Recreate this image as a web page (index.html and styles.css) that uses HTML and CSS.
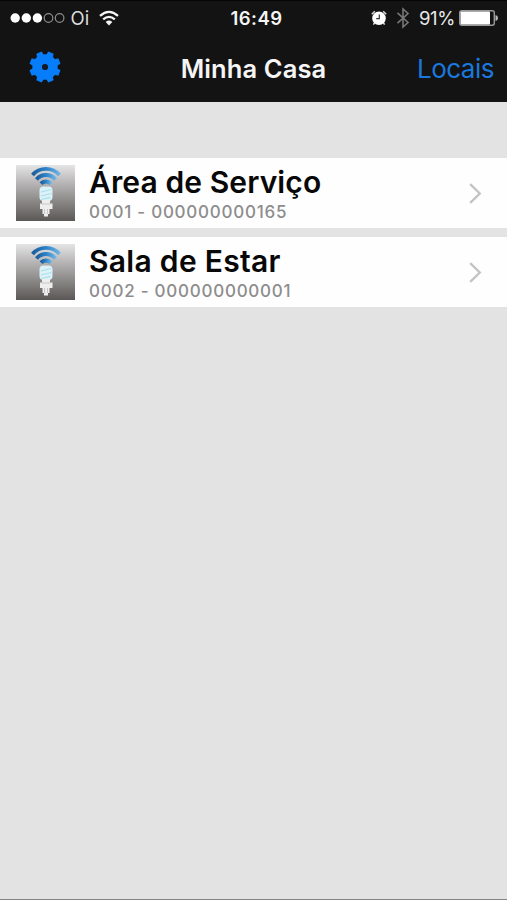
FILE: index.html
```html
<!DOCTYPE html>
<html lang="pt-BR">
<head>
  <meta charset="utf-8">
  <title>Minha Casa</title>
  <link rel="stylesheet" href="styles.css">
</head>
<body>
<svg width="0" height="0" class="symbols">
  <defs>
    <linearGradient id="metal" x1="0" y1="0" x2="0" y2="1">
      <stop offset="0" stop-color="#e6e5e5"/>
      <stop offset="0.3" stop-color="#bab8b8"/>
      <stop offset="1" stop-color="#5b5757"/>
    </linearGradient>
    <linearGradient id="wave" x1="0" y1="0" x2="1" y2="0">
      <stop offset="0" stop-color="#1d5c9c"/>
      <stop offset="0.5" stop-color="#2b83c9"/>
      <stop offset="1" stop-color="#6fb5e6"/>
    </linearGradient>
    <symbol id="lamp" viewBox="0 0 59 56">
      <rect width="59" height="56" fill="url(#metal)"/>
      <g fill="none" stroke="url(#wave)" stroke-width="3.8">
        <path d="M16.5 10A18 18 0 0 1 43.5 10"/>
        <path d="M20.5 14.4A12.5 12.5 0 0 1 39.5 14.4"/>
        <path d="M25 18.6A6.8 6.8 0 0 1 35 18.6" stroke-width="4"/>
      </g>
      <rect x="23.5" y="21.5" width="13" height="14.5" rx="4" fill="#dcf2f7"/>
      <path d="M25 27l10-2.5M25 31l10.5-2.5M25.5 34.5l9-2.2" stroke="#a9dfeb" stroke-width="1.2"/>
      <path d="M26 35h8v3.5h2.5v5.5h-3v5h-1.5v2.5h-4v-2.5h-1.5v-5H24v-5.5h2z" fill="#eee"/>
      <path d="M28.5 44v5M31.5 44v5M25.5 39h9" stroke="#bbb" stroke-width="0.8"/>
    </symbol>
  </defs>
</svg>

<header class="header">
  <div class="status">
    <div class="status-left">
      <svg width="55" height="12" viewBox="0 0 55 12">
        <g fill="#fff">
          <circle cx="5.2" cy="6" r="4.7"/>
          <circle cx="16.3" cy="6" r="4.7"/>
          <circle cx="27.4" cy="6" r="4.7"/>
        </g>
        <g fill="none" stroke="#8c8c8c" stroke-width="1.2">
          <circle cx="38.5" cy="6" r="4.3"/>
          <circle cx="49.6" cy="6" r="4.3"/>
        </g>
      </svg>
      <span class="carrier">Oi</span>
      <svg width="20" height="16" viewBox="0 0 20 16">
        <path d="M1 5.8Q10 -2 19 5.8M4.2 9.4Q10 4.4 15.8 9.4" fill="none" stroke="#f4f4f4" stroke-width="2.3"/>
        <path d="M6.7 11.9Q10 9.2 13.3 11.9L10 15.4z" fill="#f4f4f4"/>
      </svg>
    </div>
    <span class="clock">16:49</span>
    <div class="status-right">
      <svg width="16" height="16" viewBox="0 0 16 16">
        <path d="M0.8 4.2L3.8 1.2M15.2 4.2L12.2 1.2M3.8 12.5L2.4 14.6M12.2 12.5L13.6 14.6" stroke="#ddd" stroke-width="1.5"/>
        <circle cx="8" cy="8.2" r="6.8" fill="#fff"/>
        <path d="M8.3 4.6v4H5.2" fill="none" stroke="#333" stroke-width="1.2"/>
      </svg>
      <svg class="bluetooth" width="14" height="22" viewBox="0 0 14 22">
        <path d="M1.5 5.8L12 15.5L7 20V2L12 6.5L1.5 16.2" fill="none" stroke="#777" stroke-width="1.6"/>
      </svg>
      <span class="percent">91%</span>
      <svg class="battery" width="40" height="16" viewBox="0 0 40 16">
        <rect x="0.7" y="0.7" width="34.6" height="14.6" rx="2" fill="none" stroke="#999" stroke-width="1.4"/>
        <rect x="1.5" y="1.5" width="29.5" height="13" rx="0.8" fill="#fff"/>
        <path d="M36.5 5Q39 5.3 39 8T36.5 11z" fill="#bbb"/>
      </svg>
    </div>
  </div>
  <nav class="navbar">
    <svg class="gear" width="32" height="32" viewBox="-16 -16 32 32">
      <g fill="#087df9">
        <circle r="12.7"/>
        <g id="teeth">
          <path id="tooth" d="M-3.6 -11L-2.9 -15.6H2.9L3.6 -11z" transform="rotate(22.5)"/>
          <use href="#tooth" transform="rotate(45)"/>
          <use href="#tooth" transform="rotate(90)"/>
          <use href="#tooth" transform="rotate(135)"/>
        </g>
        <use href="#teeth" transform="rotate(180)"/>
      </g>
      <circle r="3.1" fill="#131a24"/>
    </svg>
    <h1 class="title">Minha Casa</h1>
    <a class="places">Locais</a>
  </nav>
</header>

<ul class="rooms">
  <li class="room">
    <svg class="thumb" width="59" height="56"><use href="#lamp"/></svg>
    <div class="room-text">
      <div class="room-name area">Área de Serviço</div>
      <div class="room-code">0001 - 000000000165</div>
    </div>
    <svg class="chevron" width="13" height="21" viewBox="0 0 13 21">
      <path d="M1.2 1.2L10.8 10.5L1.2 19.8" fill="none" stroke="#c3c3c3" stroke-width="2.3"/>
    </svg>
  </li>
  <li class="room">
    <svg class="thumb" width="59" height="56"><use href="#lamp"/></svg>
    <div class="room-text">
      <div class="room-name">Sala de Estar</div>
      <div class="room-code">0002 - 000000000001</div>
    </div>
    <svg class="chevron" width="13" height="21" viewBox="0 0 13 21">
      <path d="M1.2 1.2L10.8 10.5L1.2 19.8" fill="none" stroke="#c3c3c3" stroke-width="2.3"/>
    </svg>
  </li>
</ul>
</body>
</html>
```

FILE: styles.css
```css
* {
  box-sizing: border-box;
}

body {
  margin: 0;
  height: 900px;
  overflow: hidden;
  background-color: #e3e3e3;
  border-bottom: 1px solid #858585;
  font-family: Inter, "Liberation Sans", sans-serif;
}

svg {
  display: block;
  flex: none;
}

.symbols {
  height: 0;
}

.header {
  height: 102px;
  background-color: #131313;
  border-top: 1px solid #050505;
  color: #f5f5f5;
}

.status {
  display: grid;
  grid-template-columns: 1fr auto 1fr;
  align-items: center;
  height: 34px;
  padding: 0 8px 0 10px;
  font-size: 18.5px;
  line-height: 34px;
}

.status-left,
.status-right {
  display: flex;
  align-items: center;
}

.status-right {
  justify-content: flex-end;
}

.carrier {
  width: 28px;
  padding-left: 5.5px;
  margin-right: 6px;
  color: #ddd;
}

.clock {
  padding-left: 4px;
  font-weight: 600;
  letter-spacing: 0.5px;
}

.bluetooth {
  margin-left: 9px;
}

.percent {
  margin-left: 9px;
  letter-spacing: -0.4px;
  color: #e8e8e8;
}

.battery {
  margin-left: 4px;
}

.navbar {
  display: grid;
  grid-template-columns: 1fr auto 1fr;
  align-items: center;
  height: 67px;
  padding: 0 13px;
}

.gear {
  margin: 0 0 4px 16px;
}

.title {
  margin: 0;
  font-size: 25.5px;
  font-weight: 600;
  letter-spacing: 0.1px;
}

.places {
  justify-self: end;
  font-size: 26px;
  letter-spacing: -0.5px;
  color: #1a78dc;
}

.rooms {
  margin: 56px 0 0;
  padding: 0;
  list-style: none;
}

.room {
  display: flex;
  align-items: center;
  height: 70px;
  margin-bottom: 9px;
  padding: 0 25px 0 16px;
  background-color: #fefefe;
}

.room-text {
  flex: 1;
  margin-left: 14px;
}

.room-name {
  font-size: 30px;
  font-weight: 600;
  line-height: 36px;
  letter-spacing: 0.3px;
  color: #080808;
}

.room-name.area {
  letter-spacing: 0.1px;
}

.room-code {
  padding-top: 1px;
  margin-bottom: -1px;
  font-size: 17px;
  font-weight: 500;
  line-height: 22px;
  letter-spacing: 0.75px;
  color: #8d8d8d;
}
```
